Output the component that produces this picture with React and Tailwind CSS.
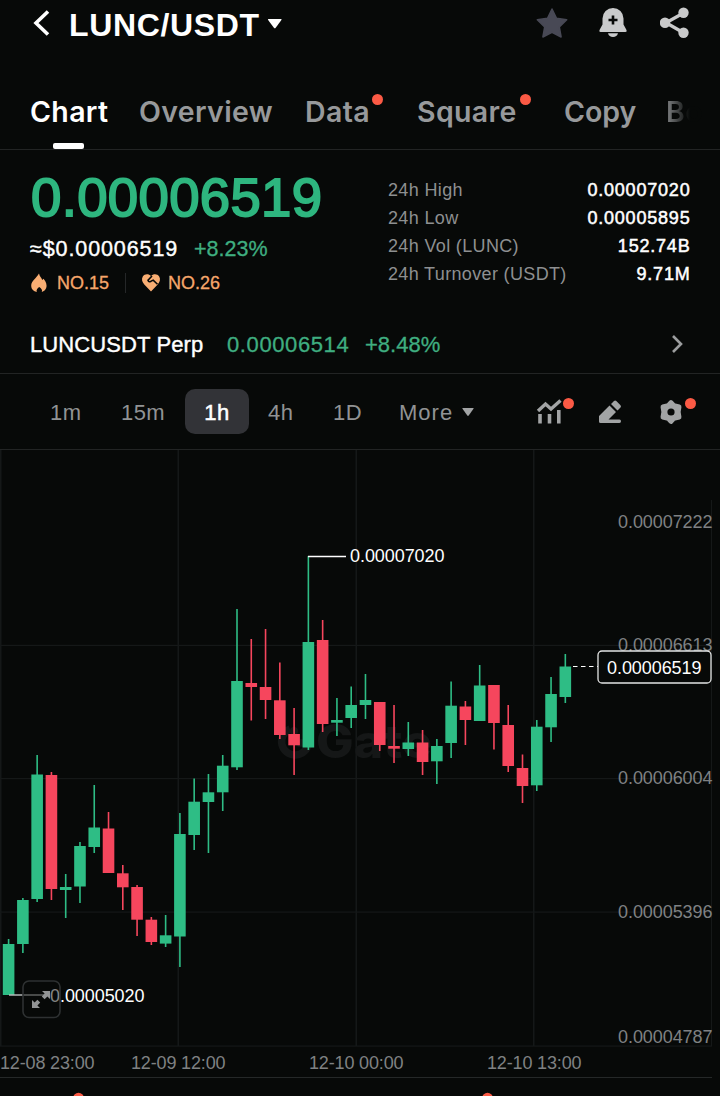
const GREEN = "#2ebd85";
const RED = "#f6465d";

// [high, body top, body bottom, low, rising]
const CANDLES = [
  [939, 944, 995, 995, 1], [898, 900, 944, 953, 1], [755, 774.5, 899, 902, 1], [772, 775, 889, 900, 0],
  [874, 887, 890, 918, 1], [842, 846, 886.5, 903, 1], [785, 827.5, 847, 853, 1], [812, 828.5, 873, 873, 0],
  [865, 873.3, 887.3, 910, 0], [885, 887, 919.7, 936, 0], [917, 919.7, 942, 945, 0], [915, 935.3, 943.6, 947, 1],
  [813, 834, 936.5, 967, 1], [778.5, 801.7, 835, 850, 1], [774, 792.3, 802, 853, 1], [755, 765.7, 792.3, 811, 1],
  [609, 681, 767.3, 770, 1], [639, 683, 687, 720.5, 0], [629, 687, 700, 719, 0], [662.5, 700.3, 735, 739, 0],
  [708, 734, 745.3, 775, 0], [556, 642, 747.5, 750, 1], [620, 640, 724, 732, 0], [698, 720, 722.7, 736, 1],
  [686.5, 705, 718, 728, 1], [674, 700, 705, 719, 1], [702, 702, 745, 751, 0], [705, 746, 748.7, 763, 0],
  [722, 742.5, 749, 756, 1], [730, 742.5, 762, 775, 0], [739, 746, 761.3, 784, 1], [681.5, 705.7, 743, 758, 1],
  [701, 706.5, 720, 745, 0], [665, 685.5, 721, 721, 1], [685, 685, 723, 749.5, 0], [705, 725, 766, 772, 0],
  [754.5, 768, 786, 803, 0], [720, 726.7, 785.3, 791, 1], [677, 694, 727.3, 742, 1], [654, 666.5, 697, 703, 1],
];

const AXIS = [[528, "0.00007222"], [651, "0.00006613"], [784, "0.00006004"], [918, "0.00005396"], [1043, "0.00004787"]];
const DATES = [[0, "12-08 23:00"], [131, "12-09 12:00"], [309, "12-10 00:00"], [487, "12-10 13:00"]];

function Dot({ className }) {
  return <span className={`absolute size-[11px] rounded-full bg-[#fb5a45] ${className}`} />;
}

function Header() {
  return (
    <header className="flex h-12 items-center pr-[30px] pl-8">
      <svg className="h-12 w-[37px]" viewBox="0 0 37 48" fill="none">
        <path d="M16 11.500 4 23 16 34.500" stroke="#fff" strokeWidth="3.600" />
      </svg>
      <h1 className="pt-0.5 text-[32px] leading-12 font-bold tracking-[0.65px]">LUNC/USDT</h1>
      <svg className="ml-[7px] h-12 w-4" viewBox="0 0 16 48">
        <path d="M1.500 19h12.500q1 0 .4.900l-5.700 7.800q-.9 1-1.800 0L1.100 19.900q-.5-.9.4-.9Z" fill="#fff" />
      </svg>
      <div className="ml-auto flex items-center">
        <svg className="h-12 w-[34px]" viewBox="0 0 34 48">
          <path d="m17 9 4.500 9.300 10.200 1.500-7.400 7.200 1.800 10L17 32.400 7.900 37l1.800-10-7.400-7.200 10.200-1.500Z" fill="#484955" stroke="#484955" strokeWidth="1.500" strokeLinejoin="round" />
        </svg>
        <svg className="ml-[29px] h-12 w-[30px]" viewBox="0 0 30 48">
          <path d="M4.500 18.500a10.500 10.500 0 0 1 21 0v6l3 5.500q.8 1.900-1 1.900h-25q-1.800 0-1-1.900l3-5.500Z" fill="#c9cacb" />
          <path d="M10 33.300h10a5.200 5.200 0 0 1-10 0Z" fill="#c9cacb" />
          <path d="M15 15.500v9M10.500 20h9" stroke="#070908" strokeWidth="2.600" />
        </svg>
        <svg className="ml-[32px] h-12 w-[30px]" viewBox="0 0 30 48">
          <path d="M23.500 13 6 22.700l17.500 10" stroke="#c9cacb" strokeWidth="3.300" fill="none" />
          <g fill="#c9cacb"><circle cx="23.500" cy="12.700" r="5.200" /><circle cx="5" cy="22.700" r="5.200" /><circle cx="23.500" cy="32.700" r="5.200" /></g>
        </svg>
      </div>
    </header>
  );
}

function Tabs() {
  return (
    <nav className="flex h-[102px] border-b border-[#222424] pt-[43px] pl-[30px] font-[Inter,sans-serif] text-[28.500px] leading-[42px] font-semibold tracking-[0.35px] text-[#97999b]">
      <div className="relative w-[109px] text-white">
        Chart
        <span className="absolute top-[52px] left-[23px] h-[6px] w-[31px] rounded-[2px] bg-white" />
      </div>
      <div className="w-[166px]">Overview</div>
      <div className="relative w-28">Data<Dot className="top-[3px] left-[67px]" /></div>
      <div className="relative w-[147px]">Square<Dot className="top-[3px] left-[103px]" /></div>
      <div className="w-[102px] tracking-[0px]">Copy</div>
      <div><span className="bg-linear-to-r from-[#858789] to-[#070908] to-65% bg-clip-text text-transparent">Bo</span></div>
    </nav>
  );
}

function Stat({ label, value }) {
  return (
    <div className="flex h-7 items-center justify-between">
      <span className="tracking-[0.35px] text-[#8e9091]">{label}</span>
      <span className="tracking-[0.8px] [-webkit-text-stroke:0.5px_#fff]">{value}</span>
    </div>
  );
}

function Summary() {
  return (
    <section className="flex h-[158px] pr-[29.500px] pl-[30px]">
      <div className="w-[358px]">
        <div className="mt-[20px] ml-px h-[56px] text-[54.500px] leading-[56px] tracking-[0.35px] text-[#2eb67f] [-webkit-text-stroke:1.900px_#2eb67f]">0.00006519</div>
        <div className="mt-[9px] flex h-7 items-center text-[21.500px]">
          <span className="w-[164px] tracking-[0.9px] [-webkit-text-stroke:0.4px_#fff]">≈$0.00006519</span>
          <span className="text-[#3fae80] [-webkit-text-stroke:0.3px_#3fae80]">+8.23%</span>
        </div>
        <div className="mt-1.5 flex h-7 items-center text-[18px] text-[#f6a66b] [-webkit-text-stroke:0.3px_#f6a66b]">
          <svg className="h-5 w-[18px]" viewBox="0 0 18 20">
            <path d="M9 .5c.6 3 2.500 4 3.200 6.500l1.300-1.300c2.600 3 3.800 6.600 2.700 9.300-.7 2-2.200 3.300-4.400 4 .9-2-.6-3.800-2.600-5-1.800 1.200-3.200 3-2.400 5C2.500 18 .8 15 1.300 11.500c.5-3.500 4.700-6 7.700-11Z" fill="#f9ae73" />
          </svg>
          <span className="ml-[9px] w-[53px]">NO.15</span>
          <span className="ml-[15px] h-[20px] w-px bg-[#252728]" />
          <svg className="ml-[15px] h-5 w-5" viewBox="0 0 20 20">
            <path d="M10 3C7.500.5 3.500.8 1.800 3.600c-1.600 2.800-.6 5.600 1.500 7.800L10 18.500l6.700-7.100c2.100-2.200 3.100-5 1.500-7.800C16.500.8 12.500.5 10 3Z" fill="#f9ae73" />
            <path d="M11 3 7 7.200c.5 2 2.300 2 3.700.6l1.500-.7 4.300 4.200" fill="none" stroke="#070908" strokeWidth="1.600" />
          </svg>
          <span className="ml-[7px]">NO.26</span>
        </div>
      </div>
      <div className="flex-1 pt-[26px] text-[18px]">
        <Stat label="24h High" value="0.00007020" />
        <Stat label="24h Low" value="0.00005895" />
        <Stat label="24h Vol (LUNC)" value="152.74B" />
        <Stat label="24h Turnover (USDT)" value="9.71M" />
      </div>
    </section>
  );
}

function PerpRow() {
  return (
    <section className="flex h-[66px] items-center border-b border-[#222424] pt-2 pr-[36px] pl-[30px] text-[22px]">
      <span className="w-[197px] tracking-[0.1px] [-webkit-text-stroke:0.4px_#fff]">LUNCUSDT Perp</span>
      <span className="w-[138px] tracking-[0.6px] text-[#3fae80] [-webkit-text-stroke:0.3px_#3fae80]">0.00006514</span>
      <span className="text-[#3fae80] [-webkit-text-stroke:0.3px_#3fae80]">+8.48%</span>
      <svg className="ml-auto h-5 w-[14px]" viewBox="0 0 14 20" fill="none">
        <path d="m3 1 8 8-8 8" stroke="#9b9d9e" strokeWidth="2.600" />
      </svg>
    </section>
  );
}

function Toolbar() {
  return (
    <section className="flex h-[76px] items-center border-b border-[#222424] pl-[50px] text-[22px] tracking-[0.4px] text-[#919394]">
      <span className="w-[71px] pt-0.5">1m</span>
      <span className="w-16 pt-0.5">15m</span>
      <span className="flex h-[45px] w-16 items-center justify-center rounded-[10px] bg-[#323337] pt-px text-white [-webkit-text-stroke:0.5px_#fff]">1h</span>
      <span className="ml-[19px] w-[65px] pt-0.5">4h</span>
      <span className="w-[66px] pt-0.5">1D</span>
      <span className="w-[63px] pt-0.5 tracking-[1px]">More</span>
      <svg className="h-3 w-3" viewBox="0 0 12 12"><path d="M.8 2h10.400q.8 0 .3.800L6.700 9.500q-.7.800-1.400 0L.5 2.800Q0 2 .8 2Z" fill="#a2a4a5" /></svg>
      <div className="relative ml-[62px] h-7 w-[62px]">
        <svg className="h-7 w-7" viewBox="-0.5 0 28 28" fill="none" stroke="#a2a4a5" strokeWidth="3.600">
          <path d="m1.500 13 7.500-7 5.500 5L24 2.500" strokeWidth="3.400" />
          <path d="M3.500 16v9.500M13 16v9.500M22.300 12v13.500" />
        </svg>
        <Dot className="top-0 left-[27px]" />
      </div>
      <svg className="h-7 w-[61px]" viewBox="0.5 0.5 61 28" fill="#a2a4a5">
        <path d="M1.500 18.500 12 8l6.500 6.500-7.500 7.500H22q1.500 0 1.500 1.800t-1.500 1.800H3q-1.500 0-1.500-1.500ZM13.500 6.500l3-3q1.200-1 2.300 0l4.200 4.200q1 1.200 0 2.300l-3 3Z" />
      </svg>
      <div className="relative h-7 w-10">
        <svg className="h-7 w-6" viewBox="0 0 24 28">
          <path d="M12 4.300 14.900 7.500 20.200 8.800 19.400 14 20.200 19.200 14.900 20.500 12 23.700 9.100 20.500 3.800 19.200 4.600 14 3.800 8.800 9.100 7.500Z" fill="#a2a4a5" stroke="#a2a4a5" strokeWidth="4.500" strokeLinejoin="round" />
          <circle cx="12" cy="14" r="3.600" fill="#070908" />
        </svg>
        <Dot className="top-0 left-[26px]" />
      </div>
    </section>
  );
}

function Chart() {
  return (
    <svg className="block h-[646px] w-[720px]" viewBox="0 450 720 646" fontFamily="'Liberation Sans', Arial, sans-serif" fontSize="18">
      <g fill="#151818">
        {[0, 177.500, 355.500, 533].map((x) => <rect key={x} x={x} y="450" width="1.500" height="596" />)}
        {[644.800, 778, 911.500, 1045.500].map((y) => <rect key={y} x="0" y={y} width="712" height="1.200" />)}
        <rect x="711" y="500" width="1" height="546" />
      </g>
      <rect x="0" y="1077" width="712" height="1" fill="#252828" />
      <path d="M290 729a13.500 13.500 0 1 0 18.500 14h-11" stroke="#151717" fill="none" strokeWidth="7.500" />
      <circle cx="294" cy="731" r="4" fill="#151717" />
      <text x="316" y="758" fontFamily="Inter, sans-serif" fontSize="46" fontWeight="800" textLength="116" lengthAdjust="spacingAndGlyphs" fill="#151717">Gate</text>
      {CANDLES.map(([high, top, bottom, low, up], i) => {
        const x = 8.600 + i * 14.275;
        return (
          <g key={i} fill={up ? GREEN : RED}>
            <rect x={x - 0.800} y={high} width="1.600" height={low - high} />
            <rect x={x - 5.800} y={top} width="11.600" height={bottom - top} />
          </g>
        );
      })}
      <path d="M308 556.500h38" stroke="#fff" strokeWidth="1.300" />
      <text x="350" y="562" textLength="94.500" fill="#fff">0.00007020</text>
      <path d="M9 995h41" stroke="#b5b7b7" strokeWidth="1.500" />
      <text x="50" y="1002" textLength="94.500" fill="#fff">0.00005020</text>
      <rect x="23" y="981" width="37" height="36.500" rx="6" fill="#070908" fillOpacity="0.500" stroke="#2e3132" strokeWidth="1.600" />
      <path d="M42 991h8v8l-2.600-2.600-2.800 2.800-2.800-2.800 2.800-2.800ZM40 1008h-8v-8l2.600 2.600 2.800-2.800 2.800 2.800-2.800 2.800Z" fill="#929495" />
      <g fill="#7f8183">
        {AXIS.map(([y, label]) => <text key={label} x="618" y={y} textLength="94.500">{label}</text>)}
        {DATES.map(([x, label]) => <text key={label} x={x} y="1069" textLength="94.500">{label}</text>)}
      </g>
      <path d="M573 666.500h25" stroke="#fff" strokeWidth="1.200" strokeDasharray="4.500 3.500" />
      <rect x="598" y="651" width="113" height="32" rx="4" fill="#070908" stroke="#e4e5e5" strokeWidth="1.300" />
      <text x="607" y="674" textLength="94.500" fill="#fff">0.00006519</text>
      <circle cx="78.500" cy="1098" r="5.300" fill="#fb5a45" />
      <circle cx="487.500" cy="1098" r="5.300" fill="#fb5a45" />
    </svg>
  );
}

export default function App() {
  return (
    <main className="h-[1096px] w-[720px] overflow-hidden bg-[#070908] font-['Liberation_Sans',Arial,sans-serif] text-white">
      <Header />
      <Tabs />
      <Summary />
      <PerpRow />
      <Toolbar />
      <Chart />
    </main>
  );
}
